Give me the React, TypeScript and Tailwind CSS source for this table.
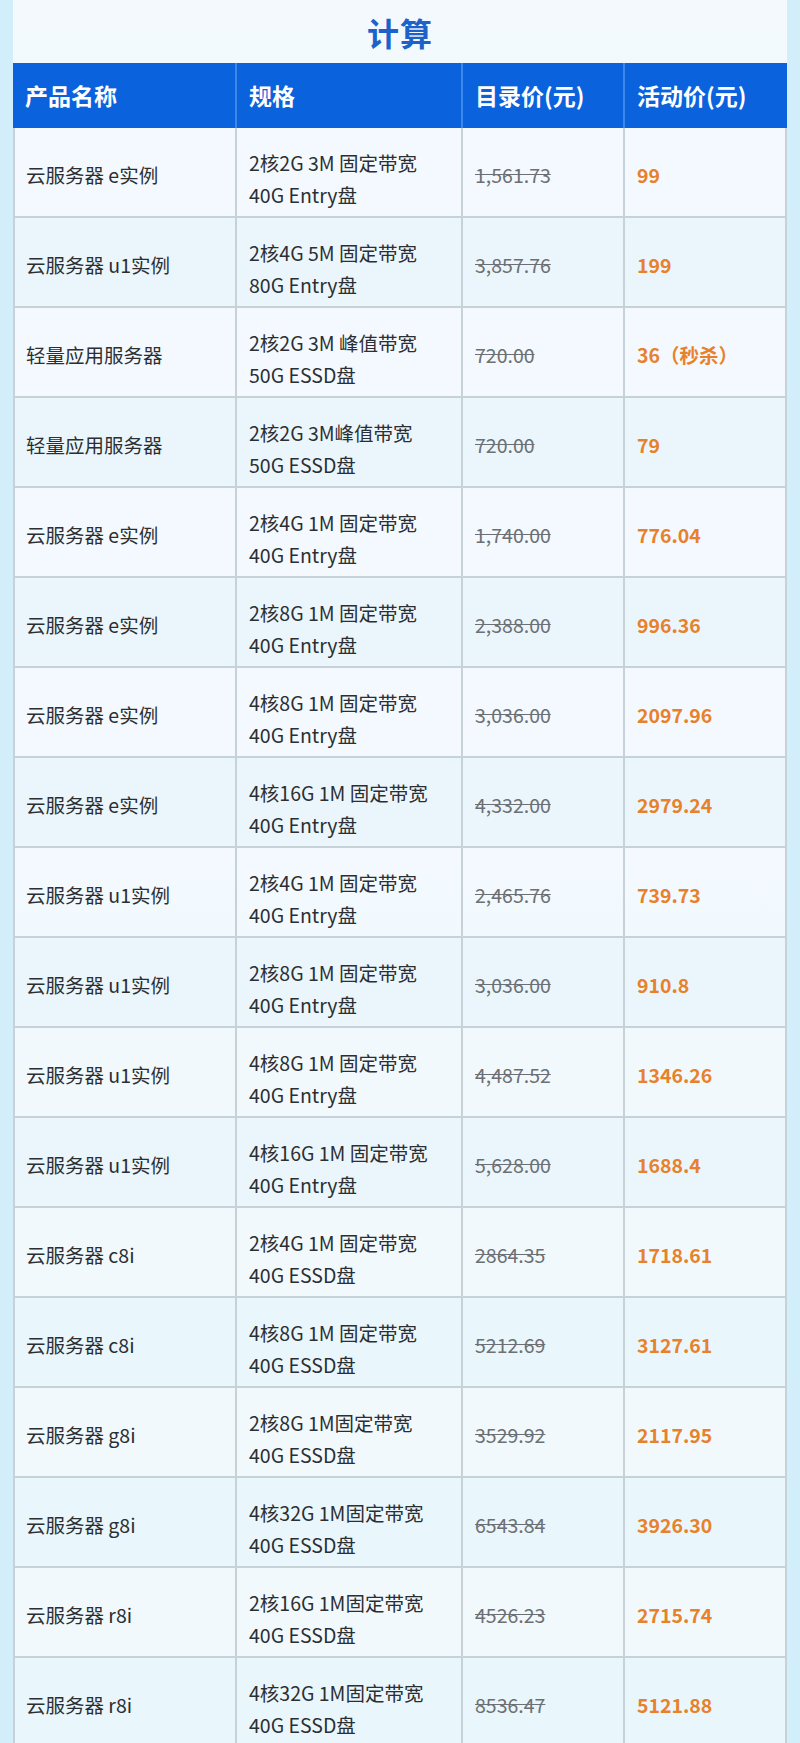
import React from 'react';

type Row = {
  name: string;
  spec1: string;
  spec2: string;
  list: string;
  sale: string;
};

const rows: Row[] = [
  { name: '云服务器 e实例', spec1: '2核2G 3M 固定带宽', spec2: '40G Entry盘', list: '1,561.73', sale: '99' },
  { name: '云服务器 u1实例', spec1: '2核4G 5M 固定带宽', spec2: '80G Entry盘', list: '3,857.76', sale: '199' },
  { name: '轻量应用服务器', spec1: '2核2G 3M 峰值带宽', spec2: '50G ESSD盘', list: '720.00', sale: '36（秒杀）' },
  { name: '轻量应用服务器', spec1: '2核2G 3M峰值带宽', spec2: '50G ESSD盘', list: '720.00', sale: '79' },
  { name: '云服务器 e实例', spec1: '2核4G 1M 固定带宽', spec2: '40G Entry盘', list: '1,740.00', sale: '776.04' },
  { name: '云服务器 e实例', spec1: '2核8G 1M 固定带宽', spec2: '40G Entry盘', list: '2,388.00', sale: '996.36' },
  { name: '云服务器 e实例', spec1: '4核8G 1M 固定带宽', spec2: '40G Entry盘', list: '3,036.00', sale: '2097.96' },
  { name: '云服务器 e实例', spec1: '4核16G 1M 固定带宽', spec2: '40G Entry盘', list: '4,332.00', sale: '2979.24' },
  { name: '云服务器 u1实例', spec1: '2核4G 1M 固定带宽', spec2: '40G Entry盘', list: '2,465.76', sale: '739.73' },
  { name: '云服务器 u1实例', spec1: '2核8G 1M 固定带宽', spec2: '40G Entry盘', list: '3,036.00', sale: '910.8' },
  { name: '云服务器 u1实例', spec1: '4核8G 1M 固定带宽', spec2: '40G Entry盘', list: '4,487.52', sale: '1346.26' },
  { name: '云服务器 u1实例', spec1: '4核16G 1M 固定带宽', spec2: '40G Entry盘', list: '5,628.00', sale: '1688.4' },
  { name: '云服务器 c8i', spec1: '2核4G 1M 固定带宽', spec2: '40G ESSD盘', list: '2864.35', sale: '1718.61' },
  { name: '云服务器 c8i', spec1: '4核8G 1M 固定带宽', spec2: '40G ESSD盘', list: '5212.69', sale: '3127.61' },
  { name: '云服务器 g8i', spec1: '2核8G 1M固定带宽', spec2: '40G ESSD盘', list: '3529.92', sale: '2117.95' },
  { name: '云服务器 g8i', spec1: '4核32G 1M固定带宽', spec2: '40G ESSD盘', list: '6543.84', sale: '3926.30' },
  { name: '云服务器 r8i', spec1: '2核16G 1M固定带宽', spec2: '40G ESSD盘', list: '4526.23', sale: '2715.74' },
  { name: '云服务器 r8i', spec1: '4核32G 1M固定带宽', spec2: '40G ESSD盘', list: '8536.47', sale: '5121.88' },
];

const App = () => {
  return (
    <div
      className="w-[800px] h-[1743px] overflow-hidden bg-gradient-to-r from-[#d3eefb] via-[#e6f6fd] to-[#d3eefb] px-[13px] text-[#2b2f33]"
      style={{ fontFamily: '"Noto Sans CJK SC", "Noto Sans", sans-serif' }}
    >
      <div className="bg-gradient-to-b from-[#f3f9fd] via-[#f0f9fd] to-[#e9f7fc] h-full">
        {/* 标题 */}
        <div className="h-[63px] flex items-center justify-center">
          <h1 className="text-[32px] font-bold text-[#1d62c9] tracking-[1px] leading-none">计算</h1>
        </div>

        <div className="grid grid-cols-[224px_226px_162px_162px]">
          {/* 表头 */}
          <div className="h-[65px] bg-[#0b62dd] border-r-2 border-[#3d86ec] flex items-center pl-[12px] text-white text-[23px] font-bold">
            产品名称
          </div>
          <div className="h-[65px] bg-[#0b62dd] border-r-2 border-[#3d86ec] flex items-center pl-[12px] text-white text-[23px] font-bold">
            规格
          </div>
          <div className="h-[65px] bg-[#0b62dd] border-r-2 border-[#3d86ec] flex items-center pl-[12px] text-white text-[23px] font-bold">
            目录价(元)
          </div>
          <div className="h-[65px] bg-[#0b62dd] flex items-center pl-[12px] text-white text-[23px] font-bold">
            活动价(元)
          </div>

          {rows.map((r, i) => {
            const bg = i % 2 === 0 ? 'bg-[#f4fafd]/70' : 'bg-[#e8f5fb]/70';
            return (
              <React.Fragment key={i}>
                <div className={`h-[90px] ${bg} border-l-2 border-r-2 border-b-2 border-[#c6d2d8] flex items-center pl-[11px] pt-[6px] text-[19.5px]`}>
                  {r.name}
                </div>
                <div className={`h-[90px] ${bg} border-r-2 border-b-2 border-[#c6d2d8] flex flex-col justify-center pl-[12px] pt-[14px] text-[19.5px] leading-[32px]`}>
                  <span>{r.spec1}</span>
                  <span>{r.spec2}</span>
                </div>
                <div className={`h-[90px] ${bg} border-r-2 border-b-2 border-[#c6d2d8] flex items-center pl-[12px] pt-[6px] text-[19.5px] text-[#6c7074] line-through decoration-[#6c7074]`}>
                  {r.list}
                </div>
                <div className={`h-[90px] ${bg} border-r-2 border-b-2 border-[#c6d2d8] flex items-center pl-[12px] pt-[6px] text-[19.5px] font-bold text-[#e8812c]`}>
                  {r.sale}
                </div>
              </React.Fragment>
            );
          })}
        </div>
      </div>
    </div>
  );
};

export default App;
